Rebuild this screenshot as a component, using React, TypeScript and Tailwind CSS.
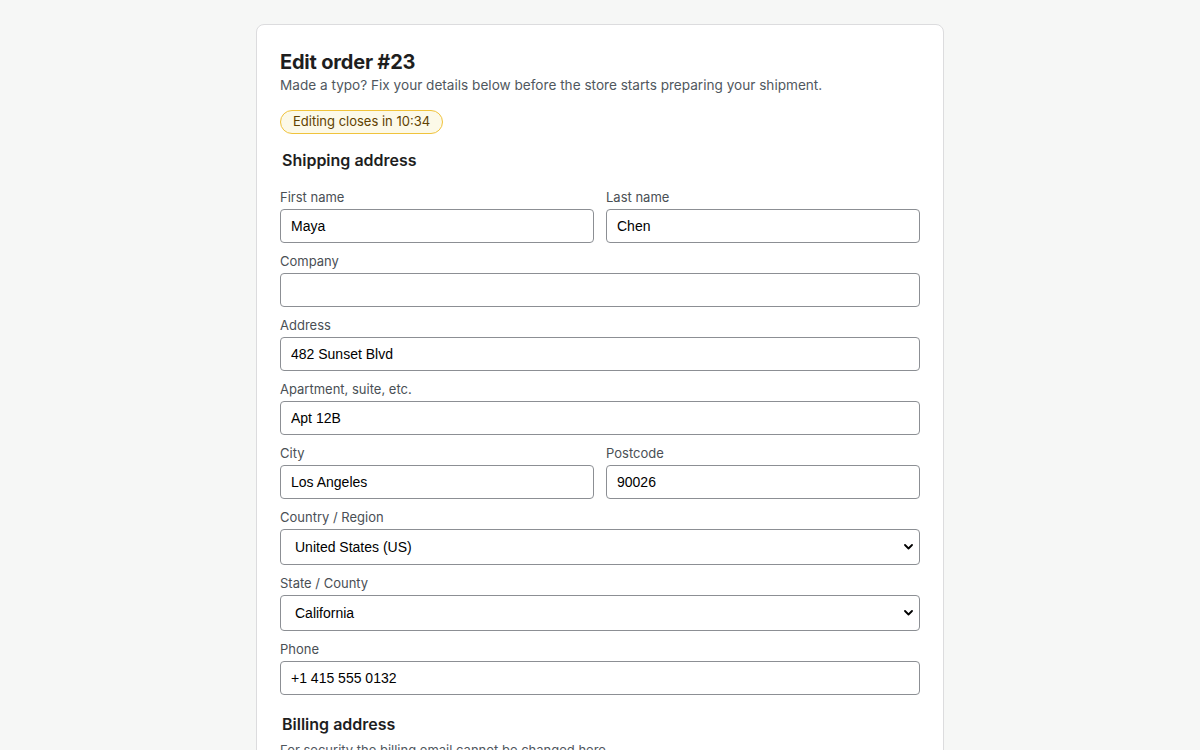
import React from "react";

const sans = { fontFamily: "Inter, 'Noto Sans', sans-serif" };

function Label({ children }: { children: React.ReactNode }) {
  return <div className="text-[13px] leading-4 text-[#4a4f55] mb-1">{children}</div>;
}

function Input({ value }: { value: string }) {
  return (
    <input
      readOnly
      value={value}
      className="block w-full h-[34px] rounded-[4px] border border-[#8c8f94] bg-white px-[10px] text-[14px] text-black outline-none"
      style={{ fontFamily: "'Liberation Sans', Arial, sans-serif" }}
    />
  );
}

function Select({ value }: { value: string }) {
  return (
    <div className="relative h-9 w-full rounded-[4px] border border-[#8c8f94] bg-white flex items-center pl-[14px] text-[14px] text-black" style={{ fontFamily: "'Liberation Sans', Arial, sans-serif" }}>
      <span>{value}</span>
      <svg className="absolute right-[6px] top-1/2 -translate-y-1/2" width="9" height="6" viewBox="0 0 9 6">
        <path d="M1 1 L4.5 4.5 L8 1" fill="none" stroke="#000" strokeWidth="1.8" strokeLinecap="round" strokeLinejoin="round" />
      </svg>
    </div>
  );
}

function Field({ label, children }: { label: string; children: React.ReactNode }) {
  return (
    <div className="mb-[10px]">
      <Label>{label}</Label>
      {children}
    </div>
  );
}

export default function App() {
  return (
    <div className="min-h-[750px] bg-[#f6f7f6] pt-6" style={sans}>
      <div className="mx-auto w-[688px] rounded-lg border border-[#dcdcde] bg-white px-[23px] pt-[24px] pb-6">
        <h1 className="text-[20px] leading-[26px] font-bold text-[#1e1e1e] tracking-[-0.2px]">Edit order #23</h1>
        <p className="text-[13.6px] leading-5 text-[#50575e]">
          Made a typo? Fix your details below before the store starts preparing your shipment.
        </p>
        <div className="mt-[15px] inline-flex h-6 items-center rounded-full border border-[#f0c33c] bg-[#fcf9e8] px-3 text-[13px] text-[#614200]">
          Editing closes in 10:34
        </div>
        <h2 className="mt-[16px] ml-[2px] text-[16px] leading-5 font-semibold text-[#1e1e1e]">Shipping address</h2>
        <div className="mt-[19px]">
          <div className="grid grid-cols-2 gap-x-3">
            <Field label="First name"><Input value="Maya" /></Field>
            <Field label="Last name"><Input value="Chen" /></Field>
          </div>
          <Field label="Company"><Input value="" /></Field>
          <Field label="Address"><Input value="482 Sunset Blvd" /></Field>
          <Field label="Apartment, suite, etc."><Input value="Apt 12B" /></Field>
          <div className="grid grid-cols-2 gap-x-3">
            <Field label="City"><Input value="Los Angeles" /></Field>
            <Field label="Postcode"><Input value="90026" /></Field>
          </div>
          <Field label="Country / Region"><Select value="United States (US)" /></Field>
          <Field label="State / County"><Select value="California" /></Field>
          <Field label="Phone"><Input value="+1 415 555 0132" /></Field>
        </div>
        <h2 className="mt-[19px] ml-[2px] text-[16px] leading-5 font-semibold text-[#1e1e1e]">Billing address</h2>
        <p className="mt-[8px] text-[13px] leading-4 text-[#50575e]">For security the billing email cannot be changed here.</p>
        <div className="h-40" />
      </div>
    </div>
  );
}
